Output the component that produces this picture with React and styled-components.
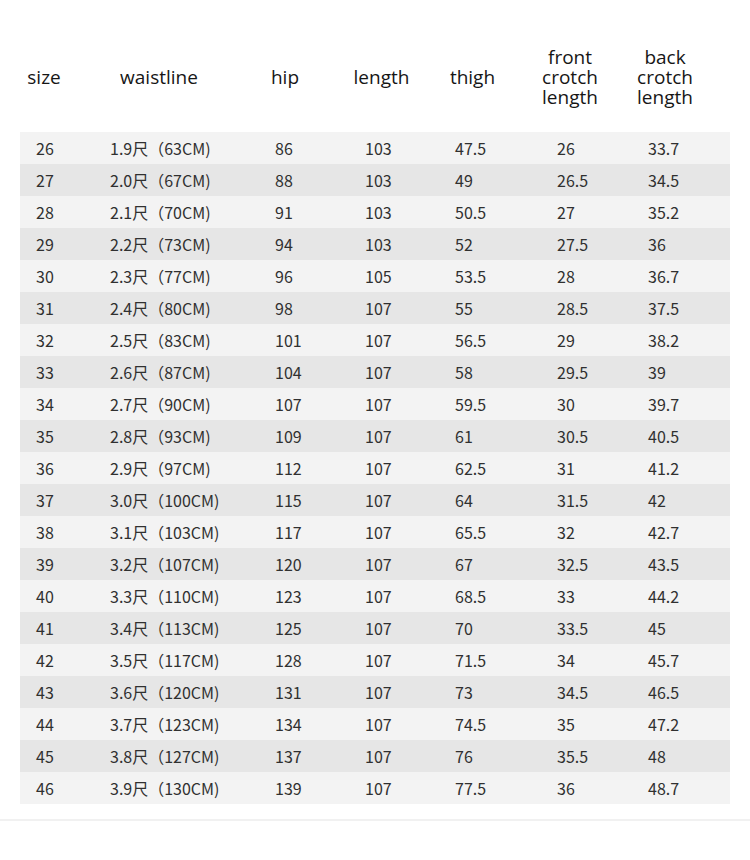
import React from "react";
import styled, { createGlobalStyle } from "styled-components";

const Global = createGlobalStyle`
  html, body { margin: 0; padding: 0; background: #ffffff; }
  body { width: 750px; height: 860px; overflow: hidden; }
`;

const COLS = [
  { w: 48, pad: 16 },
  { w: 182, pad: 42 },
  { w: 70, pad: 25 },
  { w: 123, pad: 45 },
  { w: 59, pad: 12 },
  { w: 136, pad: 55 },
  { w: 54, pad: 10 },
];
const TEMPLATE = COLS.map((c) => `${c.w}px`).join(" ") + " 1fr";

const Page = styled.div`
  width: 750px;
  padding-top: 47px;
  box-sizing: border-box;
`;

const Inner = styled.div`
  margin: 0 20px;
`;

const HeaderRow = styled.div`
  display: grid;
  grid-template-columns: ${TEMPLATE};
  height: 60px;
  align-items: center;
  margin-bottom: 25px;
  font-family: "Open Sans", "Noto Sans", sans-serif;
  font-size: 19px;
  line-height: 20px;
  color: #161616;
`;

const HeadCell = styled.div`
  display: flex;
  justify-content: center;
  text-align: center;
  white-space: nowrap;
`;

const Table = styled.div`
  display: flex;
  flex-direction: column;
`;

const Row = styled.div`
  display: grid;
  grid-template-columns: ${TEMPLATE};
  height: 32px;
  align-items: center;
  background: ${(p) => (p.$alt ? "#e6e6e6" : "#f3f3f3")};
  font-family: "Noto Sans CJK SC", "Noto Sans", sans-serif;
  font-size: 16px;
  color: #303030;
`;

const Cell = styled.div`
  padding-left: ${(p) => p.$pad}px;
  white-space: nowrap;
`;

const Rule = styled.div`
  margin-top: 15px;
  height: 2px;
  background: #f1f1f1;
  width: 750px;
`;

const headers = [
  ["size"],
  ["waistline"],
  ["hip"],
  ["length"],
  ["thigh"],
  ["front", "crotch", "length"],
  ["back", "crotch", "length"],
];

const data = [
  [26, "1.9尺（63CM)", 86, 103, "47.5", 26, "33.7"],
  [27, "2.0尺（67CM)", 88, 103, 49, "26.5", "34.5"],
  [28, "2.1尺（70CM)", 91, 103, "50.5", 27, "35.2"],
  [29, "2.2尺（73CM)", 94, 103, 52, "27.5", 36],
  [30, "2.3尺（77CM)", 96, 105, "53.5", 28, "36.7"],
  [31, "2.4尺（80CM)", 98, 107, 55, "28.5", "37.5"],
  [32, "2.5尺（83CM)", 101, 107, "56.5", 29, "38.2"],
  [33, "2.6尺（87CM)", 104, 107, 58, "29.5", 39],
  [34, "2.7尺（90CM)", 107, 107, "59.5", 30, "39.7"],
  [35, "2.8尺（93CM)", 109, 107, 61, "30.5", "40.5"],
  [36, "2.9尺（97CM)", 112, 107, "62.5", 31, "41.2"],
  [37, "3.0尺（100CM)", 115, 107, 64, "31.5", 42],
  [38, "3.1尺（103CM)", 117, 107, "65.5", 32, "42.7"],
  [39, "3.2尺（107CM)", 120, 107, 67, "32.5", "43.5"],
  [40, "3.3尺（110CM)", 123, 107, "68.5", 33, "44.2"],
  [41, "3.4尺（113CM)", 125, 107, 70, "33.5", 45],
  [42, "3.5尺（117CM)", 128, 107, "71.5", 34, "45.7"],
  [43, "3.6尺（120CM)", 131, 107, 73, "34.5", "46.5"],
  [44, "3.7尺（123CM)", 134, 107, "74.5", 35, "47.2"],
  [45, "3.8尺（127CM)", 137, 107, 76, "35.5", 48],
  [46, "3.9尺（130CM)", 139, 107, "77.5", 36, "48.7"],
];

export default function App() {
  return (
    <>
      <Global />
      <Page>
        <Inner>
          <HeaderRow>
            {headers.map((lines, i) => (
              <HeadCell key={i}>
                <div>
                  {lines.map((l, j) => (
                    <div key={j}>{l}</div>
                  ))}
                </div>
              </HeadCell>
            ))}
          </HeaderRow>
          <Table>
            {data.map((r, i) => (
              <Row key={i} $alt={i % 2 === 1}>
                {r.map((v, j) => (
                  <Cell key={j} $pad={COLS[j].pad}>
                    {v}
                  </Cell>
                ))}
              </Row>
            ))}
          </Table>
        </Inner>
        <Rule />
      </Page>
    </>
  );
}
